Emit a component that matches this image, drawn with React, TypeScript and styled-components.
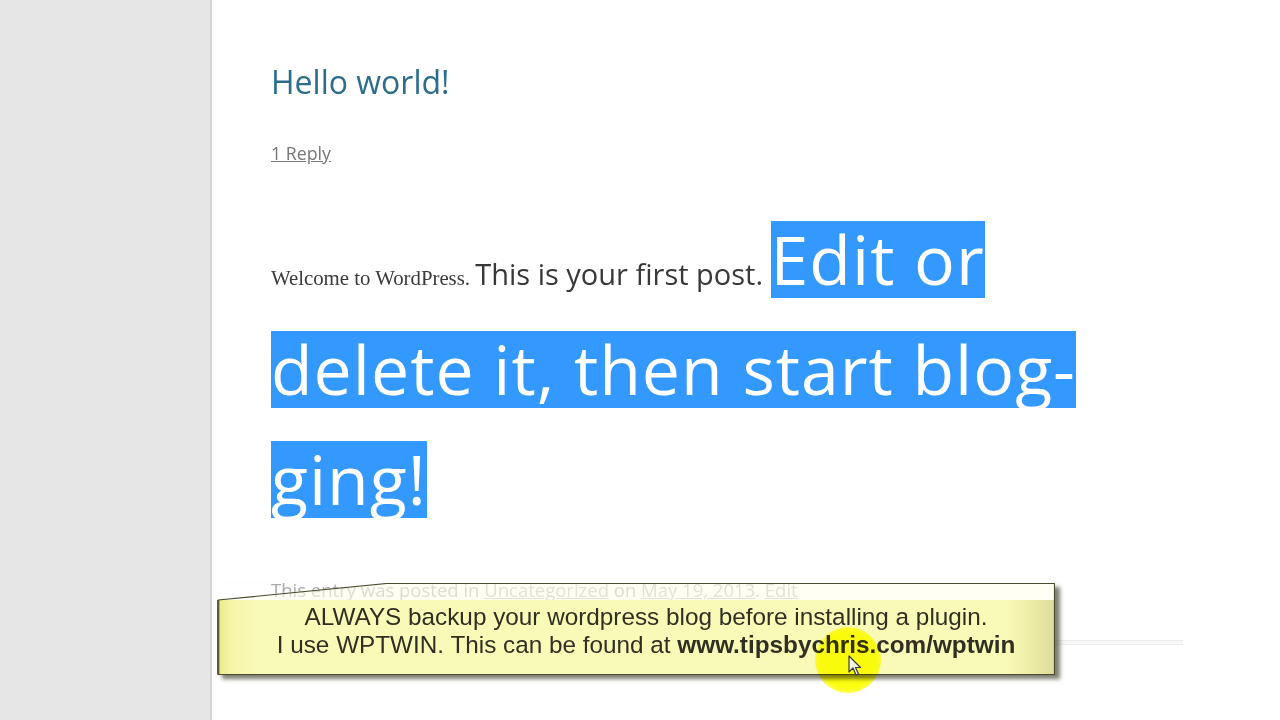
import styled, { createGlobalStyle } from 'styled-components';

const GlobalStyle = createGlobalStyle`
  html, body {
    margin: 0;
    padding: 0;
    background: #ffffff;
    overflow: hidden;
  }
  body {
    font-family: "Open Sans", "DejaVu Sans", sans-serif;
  }
`;

const FLAP = 16; // height of the slanted top flap of the callout

function Pointer(): JSX.Element {
    return (
        <PointerIcon width="14" height="22" viewBox="0 0 14 22">
            <path
                d="M1 1 L1 17 L5 13 L8 20 L10.5 19 L7.5 12.5 L12.5 12.5 Z"
                fill="#f4f4e8"
                stroke="#3a3a3a"
                strokeWidth="1.2"
                strokeLinejoin="round"
            />
        </PointerIcon>
    );
}

function App(): JSX.Element {
    return (
        <Page>
            <GlobalStyle />
            <Sidebar />
            <Main>
                <Article>
                    <Title>Hello world!</Title>
                    <ReplyLink>1 Reply</ReplyLink>
                    <Content>
                        <SerifText>Welcome to WordPress. </SerifText>
                        <PostText>This is your first post. </PostText>
                        <Selected>
                            Edit or
                            <br />
                            delete it, then start blog-
                            <br />
                            ging!
                        </Selected>
                    </Content>
                    <Meta>
                        This entry was posted in <MetaLink>Uncategorized</MetaLink> on{' '}
                        <MetaLink>May 19, 2013</MetaLink>. <MetaLink>Edit</MetaLink>
                    </Meta>
                    <Separator />
                </Article>

                <Callout>
                    <CalloutFill>
                        <CalloutLine>ALWAYS backup your wordpress blog before installing a plugin.</CalloutLine>
                        <CalloutLine>
                            I use WPTWIN. This can be found at <strong>www.tipsbychris.com/wptwin</strong>
                        </CalloutLine>
                    </CalloutFill>
                    <CalloutOutline width="838" height="92" viewBox="0 0 838 92">
                        <polyline
                            points={`1,${FLAP + 1} 170,0.5 837.5,0.5 837.5,91.5 1,91.5 1,${FLAP + 1}`}
                            fill="none"
                            stroke="#4a4a30"
                            strokeWidth="1.2"
                        />
                        <line x1="1.2" y1={FLAP + 1} x2="1.2" y2="91" stroke="#5c5c38" strokeWidth="2.4" />
                    </CalloutOutline>
                </Callout>

                <CursorHalo />
                <Pointer />
            </Main>
        </Page>
    );
}

const Page = styled.div`
  display: flex;
  width: 1280px;
  height: 720px;
  overflow: hidden;
`;

const Sidebar = styled.div`
  width: 210px;
  flex-shrink: 0;
  background: #e6e6e6;
  border-right: 2px solid #d3d3d3;
`;

const Main = styled.div`
  position: relative;
  flex: 1;
  background: #ffffff;
`;

const Article = styled.div`
  width: 912px;
  padding: 60px 0 0 59px;
`;

const Title = styled.h1`
  margin: 0;
  font-family: "Open Sans", sans-serif;
  font-weight: 400;
  font-size: 32px;
  line-height: 44px;
  color: #2c6d8c;
`;

const ReplyLink = styled.a`
  display: block;
  margin-top: 37px;
  font-size: 17.8px;
  line-height: 24px;
  color: #777777;
  text-decoration: underline;
`;

const Content = styled.p`
  margin: 39px 0 0;
  font-family: "Open Sans", sans-serif;
  font-size: 68px;
  line-height: 110px;
  color: #333333;
`;

const SerifText = styled.span`
  font-family: "Liberation Serif", serif;
  font-size: 20.8px;
  line-height: 1;
  color: #3a3a3a;
`;

const PostText = styled.span`
  font-size: 29px;
  line-height: 1;
  color: #383838;
`;

const Selected = styled.span`
  color: #ffffff;
  letter-spacing: 1px;
  background: linear-gradient(
    to bottom,
    transparent 9px,
    #3399ff 9px,
    #3399ff 86px,
    transparent 86px
  );
  -webkit-box-decoration-break: clone;
  box-decoration-break: clone;
`;

const Meta = styled.div`
  margin-top: 43px;
  font-size: 18.5px;
  line-height: 25px;
  color: #a8a8a8;
`;

const MetaLink = styled.a`
  color: #b4b4b4;
  text-decoration: underline;
`;

const Separator = styled.div`
  margin-top: 38px;
  height: 3px;
  border-top: 1px solid #ececec;
  border-bottom: 1px solid #ececec;
  background: #f8f8f8;
`;

const Callout = styled.div`
  position: absolute;
  left: 5px;
  top: 583px;
  width: 838px;
  height: 92px;
  box-shadow: 5px 4px 4px rgba(40, 40, 20, 0.6);
`;

const CalloutFill = styled.div`
  height: 100%;
  box-sizing: border-box;
  padding: ${FLAP + 4}px 0 0 20px;
  display: flex;
  flex-direction: column;
  align-items: center;
  background:
    linear-gradient(rgba(255, 255, 238, 0.6), rgba(255, 255, 238, 0.6)) top left / 100% ${FLAP + 1}px no-repeat,
    linear-gradient(
      to right,
      #e9e98c 0px,
      #f4f4a8 14px,
      #fafab8 40px,
      #fafab8 790px,
      #ececa6 815px,
      #dcdc98 838px
    ) left ${FLAP + 1}px / 100% calc(100% - ${FLAP + 1}px) no-repeat;
  clip-path: polygon(0 ${FLAP}px, 170px 0, 100% 0, 100% 100%, 0 100%);
  font-family: "Liberation Sans", Arial, sans-serif;
  font-size: 24.3px;
  line-height: 28px;
  color: #2f2f22;

  strong {
    font-weight: 700;
  }
`;

const CalloutLine = styled.div`
  white-space: nowrap;
`;

const CalloutOutline = styled.svg`
  position: absolute;
  left: 0;
  top: 0;
  pointer-events: none;
`;

const CursorHalo = styled.div`
  position: absolute;
  left: 603px;
  top: 627px;
  width: 66px;
  height: 66px;
  border-radius: 50%;
  background: radial-gradient(circle, #ffff10 0%, #ffff10 60%, rgba(255, 255, 60, 0) 100%);
  mix-blend-mode: multiply;
  pointer-events: none;
`;

const PointerIcon = styled.svg`
  position: absolute;
  left: 636px;
  top: 655px;
`;

export default App;
